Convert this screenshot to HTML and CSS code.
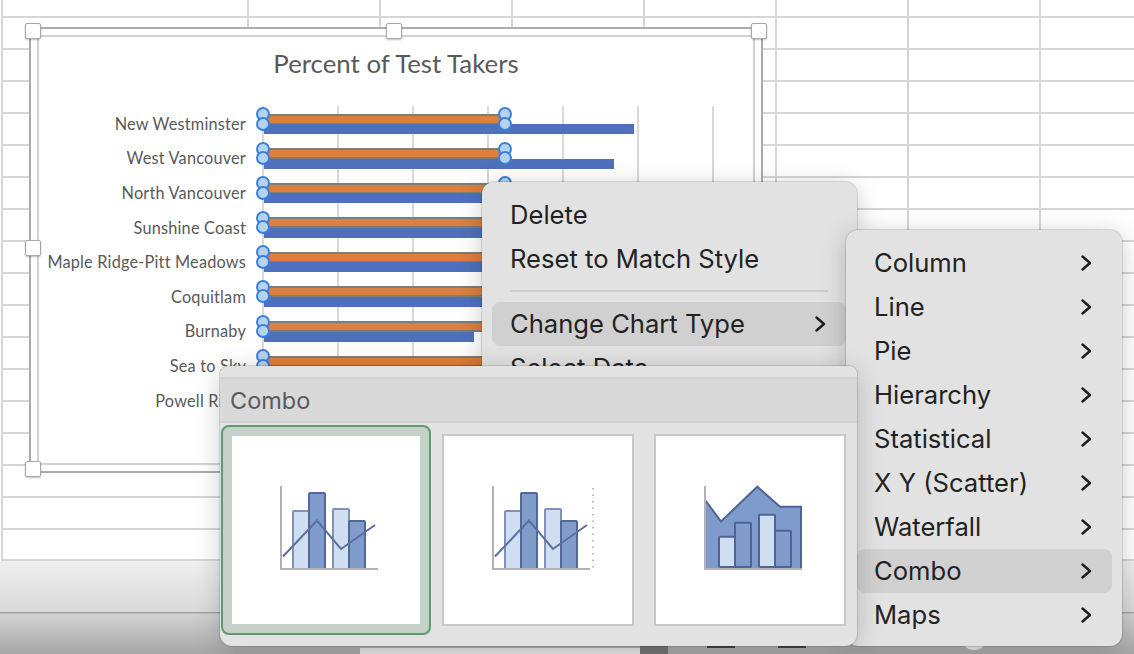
FILE: index.html
```html
<!DOCTYPE html>
<html lang="en">
<head>
    <meta charset="UTF-8">
    <title>Percent of Test Takers</title>
    <link rel="stylesheet" href="styles.css">
</head>
<body>
<div class="app">
    <!-- Planilha -->
    <div class="sheet"></div>

    <div class="statusbar">
        <div class="tab-strip"></div>
        <div class="tab-dark"></div>
        <div class="tool"></div>
        <div class="tool tool-2"></div>
        <div class="zoom-knob"></div>
    </div>

    <!-- Grafico selecionado -->
    <div class="chart">
        <div class="chart-inner">
            <h1 class="chart-title">Percent of Test Takers</h1>
            <div class="plot">
                <div class="row">
                    <div class="label">New Westminster</div>
                    <div class="bars"><div class="orange"></div><div class="blue b1"></div>
                        <i class="pt p-a"></i><i class="pt p-b"></i><i class="pt p-a p-end"></i><i class="pt p-b p-end"></i></div>
                </div>
                <div class="row">
                    <div class="label">West Vancouver</div>
                    <div class="bars"><div class="orange"></div><div class="blue b2"></div>
                        <i class="pt p-a"></i><i class="pt p-b"></i><i class="pt p-a p-end"></i><i class="pt p-b p-end"></i></div>
                </div>
                <div class="row">
                    <div class="label">North Vancouver</div>
                    <div class="bars"><div class="orange"></div><div class="blue b2"></div>
                        <i class="pt p-a"></i><i class="pt p-b"></i><i class="pt p-a p-end"></i><i class="pt p-b p-end"></i></div>
                </div>
                <div class="row">
                    <div class="label">Sunshine Coast</div>
                    <div class="bars"><div class="orange"></div><div class="blue b2"></div>
                        <i class="pt p-a"></i><i class="pt p-b"></i></div>
                </div>
                <div class="row">
                    <div class="label">Maple Ridge-Pitt Meadows</div>
                    <div class="bars"><div class="orange"></div><div class="blue b2"></div>
                        <i class="pt p-a"></i><i class="pt p-b"></i></div>
                </div>
                <div class="row">
                    <div class="label">Coquitlam</div>
                    <div class="bars"><div class="orange"></div><div class="blue b2"></div>
                        <i class="pt p-a"></i><i class="pt p-b"></i></div>
                </div>
                <div class="row">
                    <div class="label">Burnaby</div>
                    <div class="bars"><div class="orange"></div><div class="blue b7"></div>
                        <i class="pt p-a"></i><i class="pt p-b"></i></div>
                </div>
                <div class="row">
                    <div class="label">Sea to Sky</div>
                    <div class="bars"><div class="orange"></div><div class="blue b7"></div>
                        <i class="pt p-a"></i><i class="pt p-b"></i></div>
                </div>
                <div class="row">
                    <div class="label">Powell River</div>
                    <div class="bars"></div>
                </div>
            </div>
        </div>
        <span class="sizer s-tl"></span>
        <span class="sizer s-tc"></span>
        <span class="sizer s-tr"></span>
        <span class="sizer s-ml"></span>
        <span class="sizer s-bl"></span>
    </div>

    <!-- Menu de contexto -->
    <div class="menu context-menu">
        <div class="item">Delete</div>
        <div class="item">Reset to Match Style</div>
        <div class="separator"></div>
        <div class="item active">Change Chart Type
            <svg class="chevron" viewBox="0 0 11 16"><path d="M1.5 1.5 L9 8 L1.5 14.5"/></svg>
        </div>
        <div class="item">Select Data</div>
    </div>

    <!-- Submenu de tipos -->
    <div class="menu sub-menu">
        <div class="item">Column <svg class="chevron" viewBox="0 0 11 16"><path d="M1.5 1.5 L9 8 L1.5 14.5"/></svg></div>
        <div class="item">Line <svg class="chevron" viewBox="0 0 11 16"><path d="M1.5 1.5 L9 8 L1.5 14.5"/></svg></div>
        <div class="item">Pie <svg class="chevron" viewBox="0 0 11 16"><path d="M1.5 1.5 L9 8 L1.5 14.5"/></svg></div>
        <div class="item">Hierarchy <svg class="chevron" viewBox="0 0 11 16"><path d="M1.5 1.5 L9 8 L1.5 14.5"/></svg></div>
        <div class="item">Statistical <svg class="chevron" viewBox="0 0 11 16"><path d="M1.5 1.5 L9 8 L1.5 14.5"/></svg></div>
        <div class="item">X Y (Scatter) <svg class="chevron" viewBox="0 0 11 16"><path d="M1.5 1.5 L9 8 L1.5 14.5"/></svg></div>
        <div class="item">Waterfall <svg class="chevron" viewBox="0 0 11 16"><path d="M1.5 1.5 L9 8 L1.5 14.5"/></svg></div>
        <div class="item active">Combo <svg class="chevron" viewBox="0 0 11 16"><path d="M1.5 1.5 L9 8 L1.5 14.5"/></svg></div>
        <div class="item">Maps <svg class="chevron" viewBox="0 0 11 16"><path d="M1.5 1.5 L9 8 L1.5 14.5"/></svg></div>
    </div>

    <!-- Galeria Combo -->
    <div class="gallery">
        <div class="gallery-head">Combo</div>
        <div class="gallery-body">
            <div class="thumb selected">
                <svg class="thumb-icon" viewBox="0 0 188 188">
                    <rect class="light" x="61" y="75" width="16" height="58" rx="1"/>
                    <rect class="dark" x="77" y="57" width="16" height="76" rx="1"/>
                    <rect class="light" x="101" y="73" width="16" height="60" rx="1"/>
                    <rect class="dark" x="117" y="85" width="16" height="48" rx="1"/>
                    <path class="axis" d="M49 50 V133 H146"/>
                    <path class="trend" d="M51 120.5 L85 84.5 L109 113 L143 89"/>
                </svg>
            </div>
            <div class="thumb">
                <svg class="thumb-icon" viewBox="0 0 188 188">
                    <rect class="light" x="61" y="75" width="16" height="58" rx="1"/>
                    <rect class="dark" x="77" y="57" width="16" height="76" rx="1"/>
                    <rect class="light" x="101" y="73" width="16" height="60" rx="1"/>
                    <rect class="dark" x="117" y="85" width="16" height="48" rx="1"/>
                    <path class="axis" d="M49 50 V133 H146"/>
                    <path class="axis-dots" d="M149 52 V134"/>
                    <path class="trend" d="M51 120.5 L85 84.5 L109 113 L143 89"/>
                </svg>
            </div>
            <div class="thumb">
                <svg class="thumb-icon" viewBox="0 0 188 188">
                    <path class="area" d="M49.5 64.5 L65 85.5 L101.3 50.7 L124 70.7 H145 V132.5 H49.5 Z"/>
                    <path class="area-edge" d="M49.5 64.5 L65 85.5 L101.3 50.7 L124 70.7 H145 V132.5"/>
                    <rect class="light edge" x="63" y="100.7" width="16" height="30.3" rx="1"/>
                    <rect class="dark edge" x="79" y="86.7" width="16" height="44.3" rx="1"/>
                    <rect class="light edge" x="103" y="78.7" width="16" height="52.3" rx="1"/>
                    <rect class="dark edge" x="119" y="94.7" width="16" height="36.3" rx="1"/>
                    <path class="axis" d="M49 50 V133 H146"/>
                </svg>
            </div>
        </div>
    </div>
</div>
</body>
</html>
```

FILE: styles.css
```css
* {
  box-sizing: border-box;
}

body {
  margin: 0;
  overflow: hidden;
  background: #fff;
}

.app {
  position: relative;
  width: 1134px;
  height: 654px;
  overflow: hidden;
}

/* Planilha: linhas de grade desenhadas no fundo */
.sheet {
  height: 561px;
  margin-left: 1px;
  border-left: 2px solid #d6d6d6;
  border-bottom: 2px solid #d6d6d6;
  background-color: #fff;
  background-image:
    repeating-linear-gradient(to bottom, transparent 0, transparent 16px, #d6d6d6 16px, #d6d6d6 18px, transparent 18px, transparent 32px),
    linear-gradient(#fff, #fff),
    repeating-linear-gradient(to right, #d6d6d6 0, #d6d6d6 2px, transparent 2px, transparent 132px);
  background-size: auto, 244px 100%, auto;
  background-position: 0 0, 0 0, 244px 0;
  background-repeat: repeat, no-repeat, repeat;
}

/* Faixa inferior */
.statusbar {
  display: flex;
  align-items: flex-start;
  height: 93px;
  padding: 85px 0 0 360px;
  background:
    linear-gradient(to bottom, #efefef 0, #d9d9d9 51px, #a0a0a0 51px, #a3a3a3 52px, #d2d2d2 53px, #a6a6a6 93px);
}

.tab-strip {
  width: 280px;
  height: 6px;
  margin-top: 2px;
  background: #e3e3e3;
}

.tab-dark {
  width: 28px;
  height: 8px;
  background: #737373;
}

.tool {
  width: 28px;
  height: 2px;
  margin-left: 39px;
  background: #444;
}

.tool-2 {
  margin-left: 43px;
}

.zoom-knob {
  width: 26px;
  height: 26px;
  margin: -22px 0 0 155px;
  border-radius: 50%;
  background: #e8e8e8;
}

/* Grafico */
.chart {
  position: absolute;
  top: 27px;
  left: 29px;
  width: 734px;
  height: 446px;
  padding: 6px;
  background: #fff;
  border: 2px solid #ababab;
}

.chart-inner {
  height: 100%;
  background: #fff;
  border: 2px solid #d2d2d2;
  font-family: Lato, "Open Sans", sans-serif;
  color: #595959;
}

.chart-title {
  margin: 0;
  height: 69px;
  padding-top: 10px;
  font-size: 25.8px;
  font-weight: 400;
  line-height: 32px;
  text-align: center;
}

.plot {
  display: flex;
  flex-direction: column;
  height: 314px;
  background-color: #fff;
  background-image:
    linear-gradient(#fff, #fff),
    repeating-linear-gradient(to right, #d9d9d9 0, #d9d9d9 2px, transparent 2px, transparent 75px);
  background-size: 223px 100%, auto;
  background-position: 0 0, 223px 0;
  background-repeat: no-repeat, repeat;
}

.row {
  display: flex;
  flex: 0 0 34.6px;
  align-items: center;
}

.label {
  width: 207px;
  font-size: 16.3px;
  letter-spacing: 0.2px;
  text-align: right;
  white-space: nowrap;
}

.bars {
  position: relative;
  align-self: stretch;
  margin-left: 18px;
  padding-top: 7.5px;
}

.orange {
  width: 237px;
  height: 11px;
  background: #dd7f3f;
  border-top: 2px solid #7d7d78;
  border-bottom: 2px solid #7d7d78;
}

.blue {
  height: 10px;
  margin-top: -0.5px;
  background: #4f71bd;
}

.b1 { width: 370px; }
.b2 { width: 350px; }
.b7 { width: 210px; }

/* Pontos de dados selecionados */
.pt {
  position: absolute;
  left: -8px;
  width: 14px;
  height: 14px;
  background: #b5d3f0;
  border: 2px solid #3a80dc;
  border-radius: 50%;
}

.p-a { top: 1px; }
.p-b { top: 10.5px; }
.p-end { left: 234px; }

/* Alcas de redimensionamento */
.sizer {
  position: absolute;
  width: 16px;
  height: 16px;
  background: #fff;
  border: 1px solid #a8a8a8;
  border-radius: 2px;
  box-shadow: 0 1px 2px rgba(0, 0, 0, 0.25);
}

.s-tl { top: -6px; left: -6px; }
.s-tc { top: -6px; left: 355px; }
.s-tr { top: -6px; left: 720px; }
.s-ml { top: 211px; left: -6px; }
.s-bl { top: 432px; left: -6px; }

/* Menus */
.menu {
  position: absolute;
  padding-top: 11px;
  background: #e2e2e2;
  border-radius: 12px;
  box-shadow: 0 0 0 1px rgba(0, 0, 0, 0.12), 0 4px 26px rgba(0, 0, 0, 0.2);
  font-family: Inter, Roboto, sans-serif;
  font-size: 25.6px;
  color: #222;
}

.context-menu {
  top: 182px;
  left: 482px;
  width: 375px;
  height: 260px;
  padding-left: 10px;
  padding-right: 11px;
}

.sub-menu {
  top: 230px;
  left: 846px;
  width: 276px;
  height: 416px;
  padding-left: 11px;
  padding-right: 10px;
}

.item {
  display: flex;
  align-items: center;
  justify-content: space-between;
  height: 44px;
  padding: 0 20px 2px 18px;
  border-radius: 8px;
  white-space: nowrap;
}

.sub-menu .item {
  padding-left: 17px;
}

.item.active {
  background: #d0d0d0;
}

.separator {
  height: 2px;
  margin: 9px 18px 10px;
  background: #cdcdcd;
}

.chevron {
  width: 11px;
  height: 16px;
  margin-top: 2px;
}

.chevron path {
  fill: none;
  stroke: #1c1c1c;
  stroke-width: 2.4;
  stroke-linecap: round;
  stroke-linejoin: round;
}

/* Galeria */
.gallery {
  position: absolute;
  top: 366px;
  left: 220px;
  width: 637px;
  height: 280px;
  padding-top: 11px;
  background: #e2e2e2;
  border-radius: 8px 8px 12px 12px;
  box-shadow: 0 0 0 1px rgba(0, 0, 0, 0.12), 0 4px 26px rgba(0, 0, 0, 0.2);
}

.gallery-head {
  height: 46px;
  padding-left: 10px;
  background: #d9d9d9;
  border-top: 2px solid #d2d2d2;
  border-bottom: 2px solid #d0d0d0;
  font-family: Inter, Roboto, sans-serif;
  font-size: 23.5px;
  line-height: 44px;
  color: #595959;
}

.gallery-body {
  display: flex;
  align-items: center;
  padding: 2px 0 0 1px;
}

.thumb {
  width: 192px;
  height: 192px;
  margin-left: 20px;
  background: #fff;
  border: 2px solid #c9c9c9;
}

.thumb.selected {
  width: 210px;
  height: 210px;
  margin-left: 0;
  margin-right: -9px;
  padding: 9px;
  background: #c6d1c9;
  border: 2px solid #5c9a6f;
  border-radius: 8px;
}

.thumb-icon {
  display: block;
  width: 188px;
  height: 188px;
  background: #fff;
}

.axis {
  fill: none;
  stroke: #b2b2b2;
  stroke-width: 2;
}

.axis-dots {
  fill: none;
  stroke: #a8a8a8;
  stroke-width: 1.5;
  stroke-dasharray: 1.5 5;
}

.trend {
  fill: none;
  stroke: #5d6e9e;
  stroke-width: 2;
}

.light {
  fill: #cfdff1;
  stroke: #8091b9;
  stroke-width: 2;
}

.dark {
  fill: #7f9ccb;
  stroke: #53679b;
  stroke-width: 2;
}

.light.edge,
.dark.edge {
  stroke: #4f6398;
}

.area {
  fill: #7f9bcb;
}

.area-edge {
  fill: none;
  stroke: #4f6398;
  stroke-width: 2;
}
```
